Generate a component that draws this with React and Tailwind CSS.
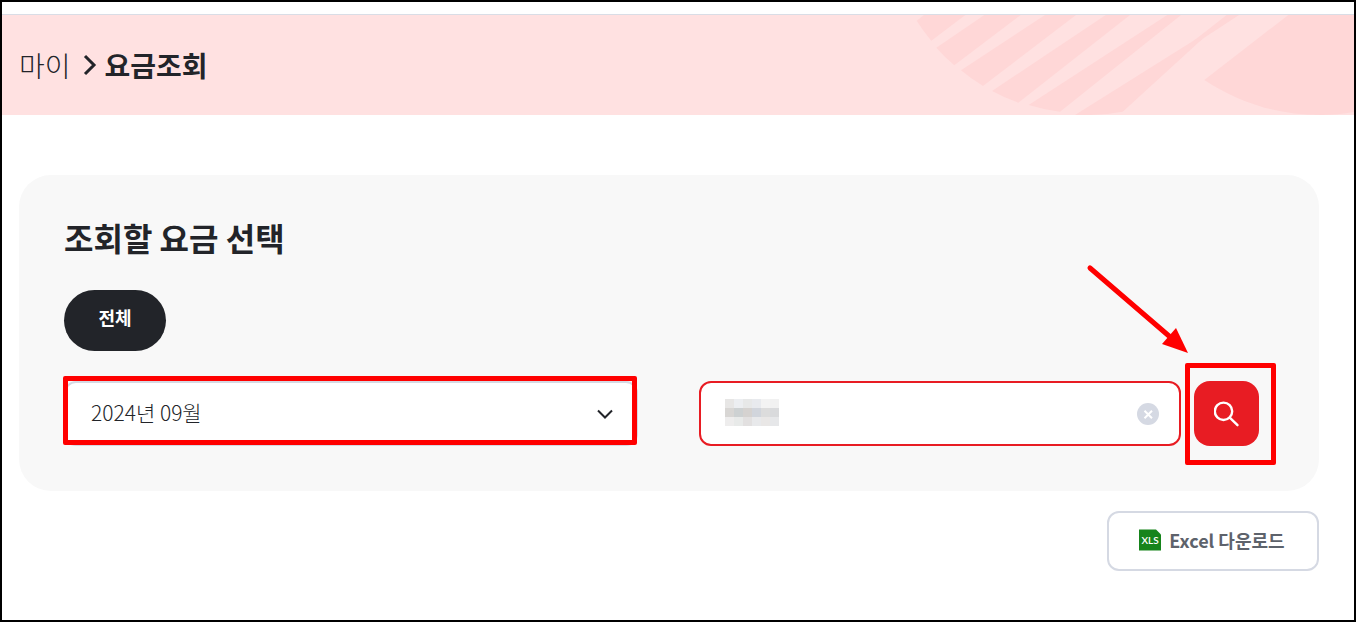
const MONTHS = ['2024년 09월', '2024년 08월', '2024년 07월']

const MASK_CELLS = [
  '#e7e6e5', '#eceef1', '#e7e8e8', '#e8eaee', '#f3f3f3', '#f1f1f1',
  '#d8d6d4', '#cdd1d2', '#d5d2d0', '#d1d5dc', '#dcdcdc', '#d9dadc',
  '#eeeded', '#e8eae9', '#e2e0e0', '#e8e9eb', '#e9e7e6', '#e6e7e9',
]

function BannerPattern() {
  return (
    <svg width="438" height="100" viewBox="0 0 438 100" className="shrink-0 fill-[#ffd7d7]" aria-hidden="true">
      <path d="M0.7 5.7 8 0H49.3L15.3 25.7Q7.5 16.5 0.7 5.7Z" />
      <path d="M20.3 32.7 68.3 0H104.7L38.3 50.3Q28.5 42 20.3 32.7Z" />
      <path d="M45 55.3 129 0H160L67 71Q55 63.8 45 55.3Z" />
      <path d="M76 76 189.7 0H214L102.3 87.7Q88.5 82.8 76 76Z" />
      <path d="M112.7 90 251.3 0H265L144 96.7Q128 94.8 112.7 90Z" />
      <path d="M159 100 277 26Q282 22.5 289 17L310.7 0H323L289 22.3Q284 26 277 32.5L206.7 96.7Q190 99.8 175 100Z" />
      <path d="M288.3 65 372.3 0H438V97Q422 100 404 100C360 100 322 87 288.3 65Z" />
    </svg>
  )
}

function Breadcrumb() {
  return (
    <nav className="flex items-center text-[28px] leading-10 pl-[17px]">
      <a href="#my" className="font-light">마이</a>
      <svg width="14" height="22" viewBox="0 0 14 22" className="ml-3 mr-2 shrink-0" fill="none" stroke="currentColor" strokeWidth="3" aria-hidden="true">
        <path d="M2 2 11 11 2 20" />
      </svg>
      <h1 className="font-bold">요금조회</h1>
    </nav>
  )
}

function MonthSelect() {
  return (
    <div className="relative">
      <select
        aria-label="조회 월"
        className="block w-full h-[65px] appearance-none rounded-xl border-2 border-[#d5d9e3] bg-white pl-[25px] pr-14 pb-0.5 text-[21px] font-light outline-none"
      >
        {MONTHS.map(m => <option key={m}>{m}</option>)}
      </select>
      <svg width="16" height="10" viewBox="0 0 16 10" className="absolute right-[25px] top-7 pointer-events-none" fill="none" stroke="currentColor" strokeWidth="2" aria-hidden="true">
        <path d="M1 1.5 8 8.5 15 1.5" />
      </svg>
      {/* highlight frame */}
      <div className="absolute -left-px right-px -top-[5px] bottom-px border-[5px] border-[#ff0000] rounded-xs pointer-events-none" />
    </div>
  )
}

function SearchField() {
  return (
    <div className="flex items-center gap-[13px]">
      <div className="flex flex-1 min-w-0 h-[65px] items-center rounded-xl border-2 border-[#e81c23] bg-white pl-6 pr-5">
        <div className="grid grid-cols-6 shrink-0 mb-0.5" aria-hidden="true">
          {MASK_CELLS.map((c, i) => <span key={i} className="size-[9px]" style={{ backgroundColor: c }} />)}
        </div>
        <input type="text" aria-label="검색어" className="flex-1 min-w-0 h-full bg-transparent text-[21px] outline-none" />
        <button type="button" aria-label="지우기" className="shrink-0">
          <svg width="22" height="22" viewBox="0 0 22 22" className="block">
            <circle cx="11" cy="11" r="11" fill="#d5d9e3" />
            <path d="M7.5 7.7 15 15.2M15 7.7 7.5 15.2" stroke="#fff" strokeWidth="2" />
          </svg>
        </button>
      </div>

      <div className="relative shrink-0">
        <button type="button" aria-label="조회" className="flex size-[65px] items-center justify-center rounded-2xl bg-[#e81c23]">
          <svg width="26" height="26" viewBox="0 0 26 26" fill="none" stroke="#fff" strokeWidth="2.4" strokeLinecap="round">
            <circle cx="9.5" cy="10.3" r="8.7" />
            <path d="M16 16.8 23.5 24.2" />
          </svg>
        </button>

        {/* highlight frame and pointer */}
        <div className="absolute -left-[9px] -right-[17px] -top-[18px] -bottom-[19px] border-[5px] border-[#ff0000] rounded-xs pointer-events-none" />
        <svg width="104" height="90" viewBox="0 0 104 90" className="absolute right-[70px] bottom-[92px] pointer-events-none" aria-hidden="true">
          <path d="M5 4 84 72" stroke="#ff0000" strokeWidth="5" strokeLinecap="round" />
          <path d="M103 89 77 80 91 64Z" fill="#ff0000" />
        </svg>
      </div>
    </div>
  )
}

function XlsIcon() {
  return (
    <svg width="22" height="22" viewBox="0 0 22 22" className="shrink-0" aria-hidden="true">
      <path d="M0 0.5H17L22 5.5V21.5H0Z" fill="#16841b" />
      <text x="11" y="15" fill="#fff" fontSize="10" fontWeight="600" textAnchor="middle" fontFamily="Lato, sans-serif">XLS</text>
    </svg>
  )
}

export default function App() {
  return (
    <div className="min-h-screen border-2 border-black bg-white pt-3 text-[#222429] font-['Noto_Sans_CJK_KR',sans-serif]">
      <header className="flex items-center justify-between overflow-hidden border-t border-[#d9dde6] bg-[#ffe1e1]">
        <Breadcrumb />
        <BannerPattern />
      </header>

      <main className="pl-[17px] pr-[35px] pt-[60px]">
        <section className="rounded-[32px] bg-[#f8f8f8] pl-[45px] pr-[60px] pt-10 pb-[45px]">
          <h2 className="text-[32px] leading-[45px] font-bold">조회할 요금 선택</h2>
          <button type="button" className="mt-[30px] flex h-[61px] w-[102px] justify-center rounded-full bg-[#222429] pt-[13px] text-[18px] leading-7 font-bold text-white">
            전체
          </button>
          <div className="mt-[30px] grid grid-cols-[574fr_560fr] gap-[61px]">
            <MonthSelect />
            <SearchField />
          </div>
        </section>

        <div className="mt-5 flex justify-end">
          <button type="button" className="flex h-[60px] w-[212px] items-center justify-center gap-2 rounded-xl border-2 border-[#d5d9e3] bg-white pb-0.5 pr-0.5 text-[18px] font-bold text-[#5d626b]">
            <XlsIcon />
            Excel 다운로드
          </button>
        </div>
      </main>
    </div>
  )
}
